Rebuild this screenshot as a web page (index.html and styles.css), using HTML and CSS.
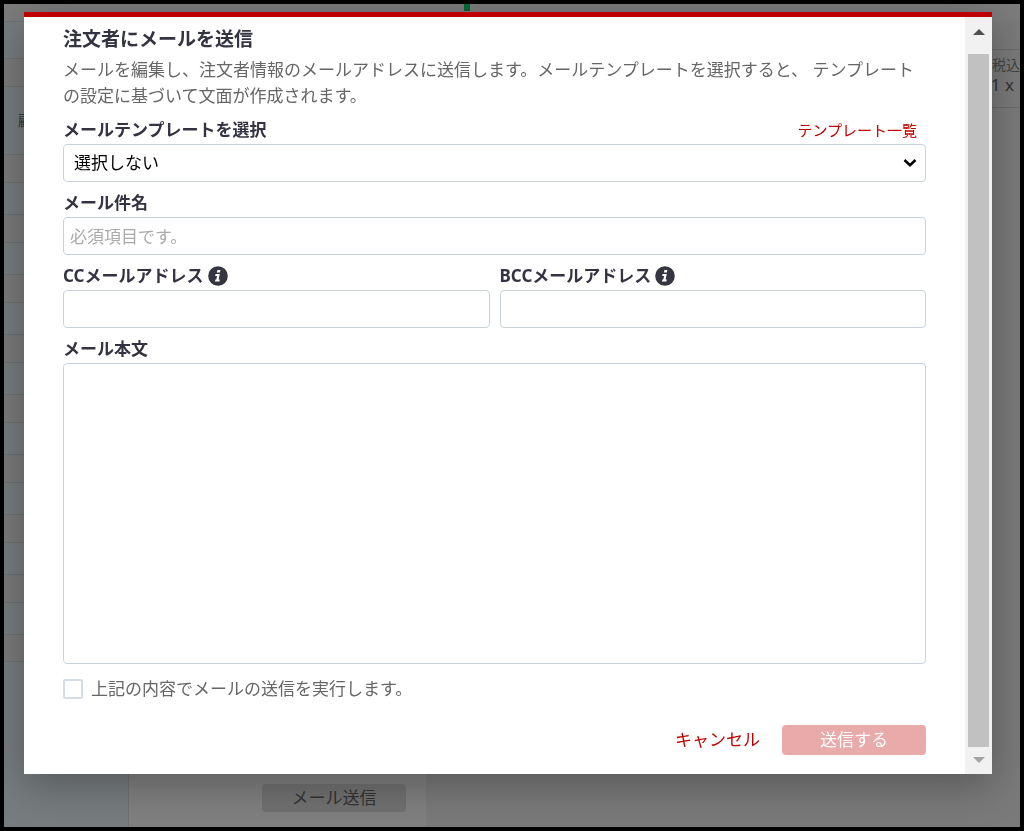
FILE: index.html
```html
<!DOCTYPE html>
<html lang="ja">
<head>
  <meta charset="UTF-8">
  <title>注文者にメールを送信</title>
  <meta name="viewport" content="width=device-width, initial-scale=1.0">
  <link rel="stylesheet" href="styles.css">
</head>
<body>
  <!-- order page behind the dialog -->
  <div class="page">
    <div class="topbar"><span class="marker"></span></div>
    <div class="columns">
      <div class="sidebar">
        <div class="row value first"></div>
        <div class="row"></div>
        <div class="row value address">顧</div>
        <div class="row"></div>
        <div class="row value"></div>
        <div class="row"></div>
        <div class="row value"></div>
        <div class="row"></div>
        <div class="row value"></div>
        <div class="row"></div>
        <div class="row value"></div>
        <div class="row"></div>
        <div class="row value"></div>
        <div class="row"></div>
        <div class="row value"></div>
        <div class="row"></div>
        <div class="row value"></div>
        <div class="row"></div>
        <div class="row value"></div>
        <div class="row"></div>
      </div>
      <div class="actions">
        <button type="button" class="page-button">メール送信</button>
      </div>
      <div class="items">
        <div class="items-head"></div>
        <div class="item">
          <span class="tax">税込</span>
          <span class="qty">1 x</span>
        </div>
      </div>
    </div>
  </div>

  <div class="modal" role="dialog" aria-labelledby="modalTitle">
    <form class="mail-form">
      <h2 id="modalTitle">注文者にメールを送信</h2>
      <p class="description">メールを編集し、注文者情報のメールアドレスに送信します。メールテンプレートを選択すると、 テンプレートの設定に基づいて文面が作成されます。</p>

      <div class="field">
        <div class="label-row">
          <label for="template">メールテンプレートを選択</label>
          <a href="#" class="template-link">テンプレート一覧</a>
        </div>
        <div class="select-wrap">
          <select id="template">
            <option>選択しない</option>
          </select>
          <svg class="chevron" width="14" height="10" viewBox="0 0 14 10"><path d="M1.5 2l5.5 5.2L12.500 2" fill="none" stroke="#000" stroke-width="2.500"/></svg>
        </div>
      </div>

      <div class="field">
        <label for="subject">メール件名</label>
        <input type="text" id="subject" placeholder="必須項目です。">
      </div>

      <div class="field-pair">
        <div class="field">
          <label for="cc">CCメールアドレス
            <svg class="info" width="20" height="20" viewBox="0 0 20 20"><circle cx="10" cy="10" r="9.800" fill="#353541"/><path d="M9.400 4h3l-.5 2.500h-3zM7.600 8h4.200l-1.200 5.600h1.200l-.4 2H7l.4-2h.9l.8-3.700H7.200z" fill="#fff"/></svg>
          </label>
          <input type="text" id="cc">
        </div>
        <div class="field">
          <label for="bcc">BCCメールアドレス
            <svg class="info" width="20" height="20" viewBox="0 0 20 20"><circle cx="10" cy="10" r="9.800" fill="#353541"/><path d="M9.400 4h3l-.5 2.500h-3zM7.600 8h4.200l-1.200 5.600h1.200l-.4 2H7l.4-2h.9l.8-3.700H7.200z" fill="#fff"/></svg>
          </label>
          <input type="text" id="bcc">
        </div>
      </div>

      <div class="field field-body">
        <label for="body">メール本文</label>
        <textarea id="body"></textarea>
      </div>

      <div class="confirm">
        <input type="checkbox" id="confirm">
        <label for="confirm">上記の内容でメールの送信を実行します。</label>
      </div>

      <div class="buttons">
        <a href="#" class="cancel">キャンセル</a>
        <button type="submit" class="submit" disabled>送信する</button>
      </div>
    </form>

    <div class="scrollbar">
      <svg class="arrow" width="12" height="6" viewBox="0 0 12 6"><path d="M0 6l6-6 6 6z" fill="#505050"/></svg>
      <div class="thumb"></div>
      <svg class="arrow" width="12" height="6" viewBox="0 0 12 6"><path d="M0 0l6 6 6-6z" fill="#a3a3a3"/></svg>
    </div>
  </div>
</body>
</html>
```
FILE: styles.css
```css
* {
  box-sizing: border-box;
}

body {
  margin: 0;
  font-family: "Noto Sans", "Noto Sans CJK JP", sans-serif;
  font-size: 17px;
  line-height: 26px;
  color: #666;
}

input,
select,
textarea,
button {
  font: inherit;
}

a {
  color: #bf0000;
  text-decoration: none;
}

/* page behind */
.page {
  display: flex;
  flex-direction: column;
  height: 100vh;
  border: 4px solid #000;
  background: #7b7b7b;
  overflow: hidden;
}

.topbar {
  height: 17px;
  flex: none;
  padding-left: 460px;
  background: #7c7c7c;
}

.marker {
  display: block;
  width: 6px;
  height: 7px;
  background: #006b35;
}

.columns {
  display: grid;
  grid-template-columns: 125px 297px 1fr;
  flex: 1;
  min-height: 0;
}

.sidebar {
  background: #777c7f;
  border-right: 1px solid #707070;
  overflow: hidden;
}

.row {
  height: 28px;
  background: #7a7a7a;
  border-top: 1px solid #6c7174;
}

.row.value {
  height: 32px;
  background: #777c7f;
}

.row.first {
  height: 37px;
}

.row.address {
  height: 68px;
  padding: 20px 0 0 14px;
  font-size: 15px;
  color: #3c3c3c;
}

.row:last-child {
  border-bottom: 1px solid #6c7174;
}

.actions {
  display: flex;
  align-items: flex-end;
  justify-content: flex-end;
  padding: 0 20px 15px;
  background: #808080;
}

.page-button {
  width: 144px;
  height: 28px;
  padding: 0;
  border: none;
  border-radius: 4px;
  background: #717171;
  color: #333;
}

.items {
  background: #7a7a7a;
}

.items-head {
  height: 29px;
  border-bottom: 1px solid #6c6c6c;
}

.item {
  display: flex;
  flex-direction: column;
  align-items: flex-end;
  height: 58px;
  padding-top: 5px;
  border-bottom: 1px solid #6c6c6c;
  line-height: 20px;
}

.tax {
  font-size: 14px;
  color: #444;
}

.qty {
  padding-right: 6px;
  color: #333;
}

/* dialog */
.modal {
  position: fixed;
  top: 12px;
  right: 32px;
  bottom: 57px;
  left: 24px;
  display: flex;
  border-top: 5px solid #bf0000;
  background: #fff;
  box-shadow: 0 10px 40px rgba(0, 0, 0, 0.3);
}

.mail-form {
  display: flex;
  flex: 1;
  flex-direction: column;
  gap: 8px;
  padding: 9px 39px 19px;
}

h2 {
  margin: 0 0 -3px;
  font-size: 19px;
  line-height: 26px;
  color: #333341;
}

.description {
  margin: 0;
}

.field {
  display: flex;
  flex: 1 0 auto;
  flex-direction: column;
  gap: 1px;
}

.mail-form > .field,
.field-pair {
  flex: none;
}

.field label {
  display: flex;
  align-items: center;
  gap: 4px;
  font-weight: bold;
  color: #333341;
}

.label-row {
  display: flex;
  justify-content: space-between;
  padding-right: 9px;
}

.template-link {
  font-size: 15px;
}

.field input,
.field select,
.field textarea {
  width: 100%;
  height: 38px;
  padding: 0 6px;
  border: 1px solid #c8d1dc;
  border-radius: 4px;
  background: #fff;
  color: #000;
}

.field input::placeholder {
  color: #aaa;
}

.select-wrap {
  display: grid;
  align-items: center;
}

.select-wrap select {
  grid-area: 1 / 1;
  padding-left: 10px;
  appearance: none;
}

.chevron {
  grid-area: 1 / 1;
  justify-self: end;
  margin-right: 9px;
  pointer-events: none;
}

.field-pair {
  display: grid;
  grid-template-columns: 1fr 1fr;
  gap: 10px;
}

.mail-form > .field-body {
  flex: 1;
}

.field-body textarea {
  flex: 1;
  resize: none;
}

.confirm {
  display: flex;
  align-items: center;
  gap: 8px;
  margin-top: 4px;
}

.confirm input {
  width: 20px;
  height: 20px;
  margin: 0;
  border: 2px solid #d5dce5;
  border-radius: 2px;
  background: #fff;
  appearance: none;
}

.buttons {
  display: flex;
  align-items: center;
  justify-content: flex-end;
  gap: 22px;
  margin-top: 15px;
}

.submit {
  width: 144px;
  height: 30px;
  padding: 0;
  border: none;
  border-radius: 4px;
  background: #e9aaaa;
  color: #fff;
}

.scrollbar {
  display: flex;
  flex-direction: column;
  align-items: center;
  width: 27px;
  padding: 12px 0 11px;
  background: #f1f1f1;
}

.arrow {
  flex: none;
}

.thumb {
  flex: 1;
  width: 21px;
  margin: 19px 0 10px;
  background: #c1c1c1;
}
```
